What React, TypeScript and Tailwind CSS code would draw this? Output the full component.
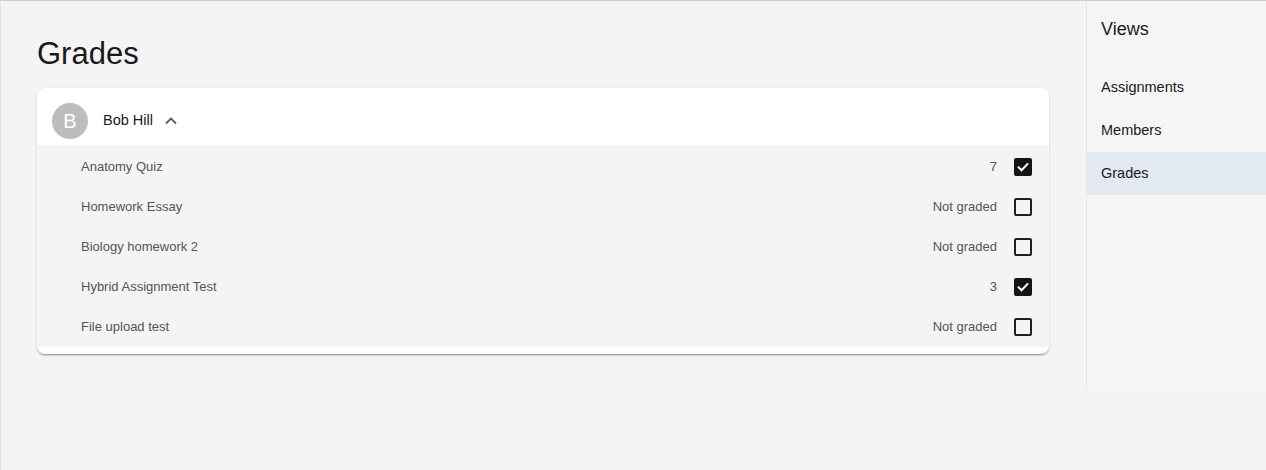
import React, { useState } from 'react';

type GradeRow = {
  title: string;
  score: string;
  done: boolean;
};

const rows: Array<GradeRow> = [
  { title: 'Anatomy Quiz', score: '7', done: true },
  { title: 'Homework Essay', score: 'Not graded', done: false },
  { title: 'Biology homework 2', score: 'Not graded', done: false },
  { title: 'Hybrid Assignment Test', score: '3', done: true },
  { title: 'File upload test', score: 'Not graded', done: false },
];

const views = ['Assignments', 'Members', 'Grades'];

const Check = ({ checked }: { checked: boolean }): React.ReactElement => (
  <span
    className={
      checked
        ? 'flex h-[18px] w-[18px] items-center justify-center rounded-[2px] bg-[#141414]'
        : 'flex h-[18px] w-[18px] items-center justify-center rounded-[2px] border-2 border-[#1f1f1f]'
    }
  >
    {checked ? (
      <svg width="14" height="14" viewBox="0 0 24 24" fill="none">
        <path d="M4.5 12.5l5 5L19.5 7" stroke="white" strokeWidth="3.4" strokeLinecap="square" />
      </svg>
    ) : (
      <></>
    )}
  </span>
);

const App = (): React.ReactElement => {
  const [open, setOpen] = useState(true);
  const [view, setView] = useState('Grades');

  return (
    <div className="flex h-[470px] border-t border-l border-t-[#cdcdcd] border-l-[#e2e2e2] bg-[#f4f4f4] font-['Liberation_Sans',Arial,sans-serif] text-[#1a1a1a]">
      <main className="flex-1 pl-9 pr-[37px]">
        <h1 className="mt-[34px] mb-[15px] text-[31px] leading-[38px] font-normal">Grades</h1>
        <section className="overflow-hidden rounded-lg bg-white py-[7px] shadow-[0_2px_2px_-1px_rgba(0,0,0,0.35),0_1px_3px_rgba(0,0,0,0.12)]">
          <button
            type="button"
            className="flex h-[52px] w-full items-center border-b border-[#ececec] pl-[15px]"
            onClick={() => setOpen(!open)}
          >
            <span className="flex h-9 w-9 items-center justify-center rounded-full bg-[#bdbdbd] text-[20px] text-white">
              B
            </span>
            <span className="ml-[15px] text-[14.5px]">Bob Hill</span>
            <svg className="ml-[12px]" width="12" height="8" viewBox="0 0 12 8" fill="none">
              <path
                d={open ? 'M1 6.5L6 1.5l5 5' : 'M1 1.5L6 6.5l5-5'}
                stroke="#5a5a5a"
                strokeWidth="1.8"
              />
            </svg>
          </button>
          {open ? (
            <ul className="bg-[#f4f4f4]">
              {rows.map((row, index) => (
                <li key={index} className="flex h-10 items-center pr-[17px] pl-[44px] text-[13px] text-[#555]">
                  <span className="flex-1">{row.title}</span>
                  <span>{row.score}</span>
                  <span className="ml-[17px]">
                    <Check checked={row.done} />
                  </span>
                </li>
              ))}
            </ul>
          ) : (
            <></>
          )}
        </section>
      </main>
      <aside className="h-[389px] w-[180px] border-l border-[#e6e6e6] bg-[#f5f5f5]">
        <h2 className="mt-[16px] mb-[25px] pl-[14px] text-[18px] leading-6 font-normal">Views</h2>
        <nav className="flex flex-col">
          {views.map((v) => (
            <button
              type="button"
              key={v}
              onClick={() => setView(v)}
              className={
                v === view
                  ? 'h-[43px] bg-[#e3e9f0] pl-[14px] text-left text-[14.5px]'
                  : 'h-[43px] pl-[14px] text-left text-[14.5px]'
              }
            >
              {v}
            </button>
          ))}
        </nav>
      </aside>
    </div>
  );
};

export default App;
